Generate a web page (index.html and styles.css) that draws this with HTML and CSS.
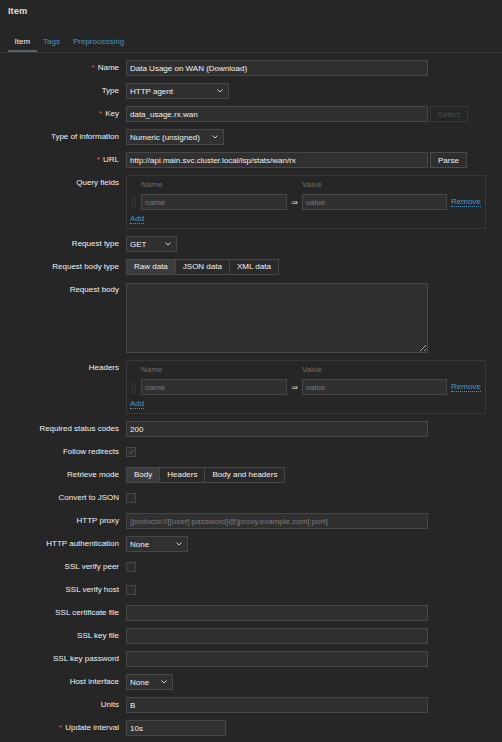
FILE: index.html
```html
<!DOCTYPE html>
<html lang="en">

<head>
    <meta charset="UTF-8">
    <meta name="viewport" content="width=device-width, initial-scale=1.0">
    <title>Item</title>
    <link rel="stylesheet" href="styles.css">
</head>

<body>
    <div class="dialog">
        <div class="dialog-header">
            <h4>Item</h4>
        </div>
        <ul class="tabs">
            <li class="active">Item</li>
            <li><a href="#">Tags</a></li>
            <li><a href="#">Preprocessing</a></li>
        </ul>

        <form class="form-grid">
            <label class="req">Name</label>
            <div class="field"><input type="text" class="w-std" value="Data Usage on WAN (Download)"></div>

            <label>Type</label>
            <div class="field">
                <div class="select w-type"><span>HTTP agent</span><svg class="chevron" viewBox="0 0 6 4"><polyline points="0.5,0.5 3,3 5.5,0.5" /></svg></div>
            </div>

            <label class="req">Key</label>
            <div class="field inline">
                <input type="text" class="w-std" value="data_usage.rx.wan">
                <button type="button" class="btn" disabled>Select</button>
            </div>

            <label>Type of information</label>
            <div class="field">
                <div class="select w-info"><span>Numeric (unsigned)</span><svg class="chevron" viewBox="0 0 6 4"><polyline points="0.5,0.5 3,3 5.5,0.5" /></svg></div>
            </div>

            <label class="req">URL</label>
            <div class="field inline">
                <input type="text" class="w-std" value="http://api.main.svc.cluster.local/isp/stats/wan/rx">
                <button type="button" class="btn">Parse</button>
            </div>

            <label class="top">Query fields</label>
            <div class="field">
                <div class="kv-table">
                    <div></div>
                    <div class="kv-head">Name</div>
                    <div></div>
                    <div class="kv-head">Value</div>
                    <div></div>

                    <div class="drag"><svg width="4" height="11" viewBox="0 0 4 11"><g fill="#3d4852"><rect x="0" y="0" width="1" height="1" /><rect x="0" y="2" width="1" height="1" /><rect x="0" y="4" width="1" height="1" /><rect x="0" y="6" width="1" height="1" /><rect x="0" y="8" width="1" height="1" /><rect x="0" y="10" width="1" height="1" /><rect x="3" y="0" width="1" height="1" /><rect x="3" y="2" width="1" height="1" /><rect x="3" y="4" width="1" height="1" /><rect x="3" y="6" width="1" height="1" /><rect x="3" y="8" width="1" height="1" /><rect x="3" y="10" width="1" height="1" /></g></svg></div>
                    <input type="text" placeholder="name">
                    <div class="arrow">&rArr;</div>
                    <input type="text" placeholder="value">
                    <a href="#" class="link remove">Remove</a>

                    <div class="add-row"><a href="#" class="link">Add</a></div>
                </div>
            </div>

            <label>Request type</label>
            <div class="field">
                <div class="select w-req"><span>GET</span><svg class="chevron" viewBox="0 0 6 4"><polyline points="0.5,0.5 3,3 5.5,0.5" /></svg></div>
            </div>

            <label>Request body type</label>
            <div class="field">
                <div class="radio-list">
                    <span class="on">Raw data</span>
                    <span>JSON data</span>
                    <span>XML data</span>
                </div>
            </div>

            <label class="top">Request body</label>
            <div class="field"><textarea></textarea></div>

            <label class="top">Headers</label>
            <div class="field">
                <div class="kv-table">
                    <div></div>
                    <div class="kv-head">Name</div>
                    <div></div>
                    <div class="kv-head">Value</div>
                    <div></div>

                    <div class="drag"><svg width="4" height="11" viewBox="0 0 4 11"><g fill="#3d4852"><rect x="0" y="0" width="1" height="1" /><rect x="0" y="2" width="1" height="1" /><rect x="0" y="4" width="1" height="1" /><rect x="0" y="6" width="1" height="1" /><rect x="0" y="8" width="1" height="1" /><rect x="0" y="10" width="1" height="1" /><rect x="3" y="0" width="1" height="1" /><rect x="3" y="2" width="1" height="1" /><rect x="3" y="4" width="1" height="1" /><rect x="3" y="6" width="1" height="1" /><rect x="3" y="8" width="1" height="1" /><rect x="3" y="10" width="1" height="1" /></g></svg></div>
                    <input type="text" placeholder="name">
                    <div class="arrow">&rArr;</div>
                    <input type="text" placeholder="value">
                    <a href="#" class="link remove">Remove</a>

                    <div class="add-row"><a href="#" class="link">Add</a></div>
                </div>
            </div>

            <label>Required status codes</label>
            <div class="field"><input type="text" class="w-std" value="200"></div>

            <label>Follow redirects</label>
            <div class="field">
                <span class="checkbox checked"><svg viewBox="0 0 10 10"><polyline points="2,5 4,7 8,2.5" /></svg></span>
            </div>

            <label>Retrieve mode</label>
            <div class="field">
                <div class="radio-list">
                    <span class="on">Body</span>
                    <span>Headers</span>
                    <span>Body and headers</span>
                </div>
            </div>

            <label>Convert to JSON</label>
            <div class="field"><span class="checkbox"></span></div>

            <label>HTTP proxy</label>
            <div class="field"><input type="text" class="w-std" placeholder="[protocol://][user[:password]@]proxy.example.com[:port]"></div>

            <label>HTTP authentication</label>
            <div class="field">
                <div class="select w-auth"><span>None</span><svg class="chevron" viewBox="0 0 6 4"><polyline points="0.5,0.5 3,3 5.5,0.5" /></svg></div>
            </div>

            <label>SSL verify peer</label>
            <div class="field"><span class="checkbox"></span></div>

            <label>SSL verify host</label>
            <div class="field"><span class="checkbox"></span></div>

            <label>SSL certificate file</label>
            <div class="field"><input type="text" class="w-std"></div>

            <label>SSL key file</label>
            <div class="field"><input type="text" class="w-std"></div>

            <label>SSL key password</label>
            <div class="field"><input type="text" class="w-std"></div>

            <label>Host interface</label>
            <div class="field">
                <div class="select w-host"><span>None</span><svg class="chevron" viewBox="0 0 6 4"><polyline points="0.5,0.5 3,3 5.5,0.5" /></svg></div>
            </div>

            <label>Units</label>
            <div class="field"><input type="text" class="w-std" value="B"></div>

            <label class="req">Update interval</label>
            <div class="field"><input type="text" class="w-small" value="10s"></div>
        </form>
    </div>
</body>

</html>
```

FILE: styles.css
```css
body {
    margin: 0;
    background-color: #262626;
    color: #f2f2f2;
    font-family: "Liberation Sans", Arial, sans-serif;
    font-size: 8px;
    color-scheme: dark;
}

a {
    color: #4796c4;
    text-decoration: none;
}

/* header + tabs */
.dialog-header {
    height: 32px;
    padding: 6px 8px 0;
    box-sizing: border-box;
}

.dialog-header h4 {
    margin: 0;
    font-size: 9.33px;
    line-height: 11px;
    font-weight: bold;
    color: #dcdcdc;
}

.tabs {
    display: flex;
    margin: 0;
    padding: 0 0 0 8px;
    list-style: none;
    border-bottom: 1px solid #383838;
}

.tabs li {
    padding: 5px 6.5px 3px;
    line-height: 10px;
    border-bottom: 2px solid transparent;
}

.tabs li.active {
    border-bottom-color: #55646f;
    color: #f2f2f2;
}

/* form */
.form-grid {
    display: grid;
    grid-template-columns: 119px auto;
    column-gap: 7px;
    row-gap: 7px;
    padding-top: 7px;
    align-items: start;
}

.form-grid > label {
    text-align: right;
    line-height: 16px;
    white-space: nowrap;
}

.req::before {
    content: "*";
    color: #e45959;
    padding-right: 3px;
}

.field {
    min-height: 16px;
}

.inline {
    display: flex;
    gap: 2px;
}

input[type="text"] {
    box-sizing: border-box;
    height: 16px;
    margin: 0;
    padding: 0 3px;
    background: #303030;
    border: 1px solid #474747;
    color: #f2f2f2;
    font: inherit;
    outline: none;
}

input::placeholder {
    color: #7b7b7b;
}

.w-std {
    width: 302px;
}

.w-small {
    width: 100px;
}

.btn {
    box-sizing: border-box;
    height: 16px;
    padding: 0 7px;
    margin: 0;
    background: #2e2e2e;
    border: 1px solid #4b4b4b;
    color: #f2f2f2;
    font: inherit;
}

.btn:disabled {
    background: transparent;
    border-color: #383838;
    color: #4c4c4c;
}

/* select lookalike */
.select {
    box-sizing: border-box;
    display: flex;
    align-items: center;
    justify-content: space-between;
    height: 16px;
    padding: 0 5px 0 3px;
    background: #303030;
    border: 1px solid #474747;
}

.chevron {
    width: 6px;
    height: 4px;
    fill: none;
    stroke: #cfcfcf;
    stroke-width: 1;
}

.w-type {
    width: 103px;
}

.w-info {
    width: 98px;
}

.w-req {
    width: 51px;
}

.w-auth {
    width: 62px;
}

.w-host {
    width: 47px;
}

/* segmented buttons */
.radio-list {
    display: flex;
}

.radio-list span {
    box-sizing: border-box;
    height: 16px;
    line-height: 14px;
    padding: 0 7px;
    border: 1px solid #474747;
    background: #2a2a2a;
}

.radio-list span + span {
    margin-left: -1px;
}

.radio-list span.on {
    background: #3c3c3c;
}

textarea {
    box-sizing: border-box;
    display: block;
    width: 302px;
    height: 70px;
    margin: 1px 0 0;
    background: #303030;
    border: 1px solid #474747;
    color: #f2f2f2;
    font: inherit;
    resize: both;
}

/* name/value tables */
.kv-table {
    box-sizing: border-box;
    width: 360px;
    display: grid;
    grid-template-columns: 11px 146px 15px 145px auto;
    row-gap: 4px;
    padding: 4px 4px 4px 3px;
    border: 1px solid #383838;
    align-items: center;
}

.kv-head {
    line-height: 10px;
    color: #6e6e6e;
}

.kv-table input[type="text"] {
    width: 100%;
}

.drag {
    display: flex;
    padding-left: 2px;
}

.arrow {
    text-align: center;
    font-family: "DejaVu Sans", sans-serif;
    font-size: 8px;
    color: #dcdcdc;
}

.link {
    border-bottom: 1px dotted #4796c4;
    line-height: 9px;
}

.remove {
    margin-left: 4px;
    justify-self: start;
}

.add-row {
    grid-column: 1 / -1;
    line-height: 10px;
}

/* checkbox */
.checkbox {
    box-sizing: border-box;
    display: block;
    width: 10px;
    height: 10px;
    margin-top: 3px;
    background: #2d2d2d;
    border: 1px solid #474747;
}

.checkbox svg {
    display: block;
    width: 8px;
    height: 8px;
    fill: none;
    stroke: #5b6b78;
    stroke-width: 1.2;
}
```
